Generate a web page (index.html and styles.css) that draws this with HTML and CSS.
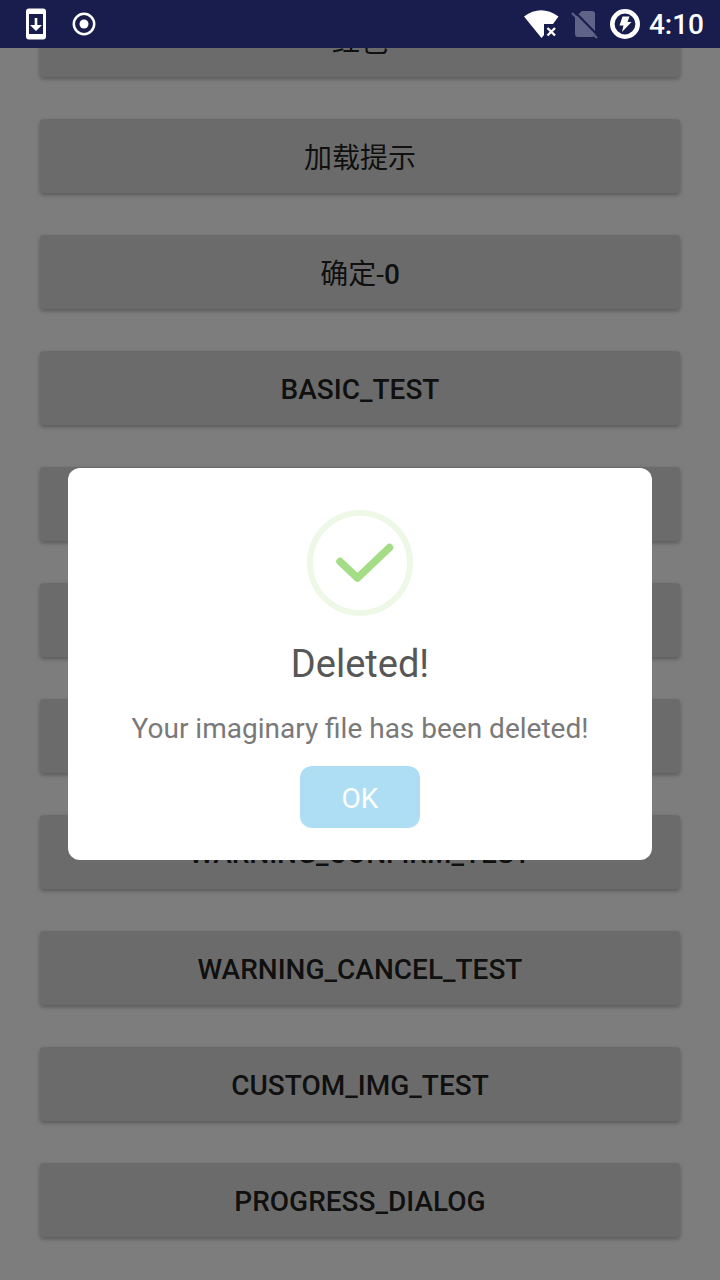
FILE: index.html
```html
<!DOCTYPE html>
<html lang="zh">
<head>
<meta charset="utf-8">
<meta name="viewport" content="width=device-width, initial-scale=1">
<title>Deleted!</title>
<link rel="stylesheet" href="styles.css">
</head>
<body>
<div class="screen">
  <header class="status-bar">
    <div class="status-group status-left">
      <svg class="icon-update" width="22" height="32" viewBox="0 0 22 32" aria-hidden="true">
        <path fill="#fff" fill-rule="evenodd" d="M3 0.5H17A3 3 0 0 1 20 3.500V28.500A3 3 0 0 1 17 31.500H3A3 3 0 0 1 0 28.500V3.500A3 3 0 0 1 3 .5ZM3 6V26H17V6Z"/>
        <path fill="#fff" d="M8.700 10H11.300V17H16L10 23L4 17H8.700Z"/>
      </svg>
      <svg width="24" height="24" viewBox="0 0 24 24" aria-hidden="true">
        <circle cx="12" cy="12" r="10.200" fill="none" stroke="#fff" stroke-width="2.500"/>
        <circle cx="12" cy="12" r="4.500" fill="#fff"/>
      </svg>
    </div>
    <div class="status-group status-right">
      <svg width="35" height="30" viewBox="0 0 35 30" aria-hidden="true">
        <path fill="#fff" d="M0 7.500Q17-5 34.500 7.500L29 15H20V26L17.500 29Z"/>
        <path stroke="#fff" stroke-width="2.400" d="M23.500 19L31 26.500M31 19L23.500 26.500"/>
      </svg>
      <svg width="27" height="30" viewBox="0 0 27 30" aria-hidden="true">
        <path fill="#5f6388" d="M11 2H21A3 3 0 0 1 24 5V25A3 3 0 0 1 21 28H7A3 3 0 0 1 4 25V8Z"/>
        <path stroke="#181d4d" stroke-width="2" d="M3 2L27 26.500"/>
        <path stroke="#5f6388" stroke-width="2.200" d="M1 4L26 29"/>
      </svg>
      <svg width="30" height="30" viewBox="0 0 30 30" aria-hidden="true">
        <circle cx="15" cy="15" r="12.700" fill="none" stroke="#fff" stroke-width="4.600"/>
        <path fill="#fff" d="M12.500 7.500H19.500L17.500 13H21.500L12 23L13.500 16.500H9.500Z"/>
      </svg>
      <time class="clock">4:10</time>
    </div>
  </header>
  <div class="content">
    <main class="list">
      <button class="item item-cjk" type="button">红包</button>
      <button class="item item-cjk" type="button">加载提示</button>
      <button class="item item-cjk" type="button">确定-<span class="digit">0</span></button>
      <button class="item" type="button">BASIC_TEST</button>
      <button class="item" type="button"></button>
      <button class="item" type="button"></button>
      <button class="item" type="button"></button>
      <button class="item" type="button">WARNING_CONFIRM_TEST</button>
      <button class="item" type="button">WARNING_CANCEL_TEST</button>
      <button class="item" type="button">CUSTOM_IMG_TEST</button>
      <button class="item" type="button">PROGRESS_DIALOG</button>
    </main>
    <div class="scrim">
      <section class="dialog" role="dialog" aria-modal="true" aria-labelledby="dialog-title">
        <svg width="106" height="106" viewBox="0 0 106 106" aria-hidden="true">
          <circle cx="53" cy="53" r="50" fill="none" stroke="#edf8e7" stroke-width="6"/>
          <path d="M33 51.500L50.500 68L82.500 37.500" fill="none" stroke="#a5dc86" stroke-width="7.500" stroke-linecap="round" stroke-linejoin="round"/>
        </svg>
        <h1 class="title" id="dialog-title">Deleted!</h1>
        <p class="message">Your imaginary file has been deleted!</p>
        <button class="confirm" type="button">OK</button>
      </section>
    </div>
  </div>
</div>
</body>
</html>
```
FILE: styles.css
```css
* {
  box-sizing: border-box;
}

body {
  margin: 0;
  font-family: Roboto, "Noto Sans CJK SC", sans-serif;
  font-size: 28px;
}

.screen {
  display: flex;
  flex-direction: column;
  height: 100vh;
  background: #fafafa;
}

.status-bar {
  display: flex;
  flex: none;
  align-items: center;
  justify-content: space-between;
  height: 48px;
  padding: 0 16px 0 26px;
  background: #181d4d;
  color: #fff;
}

.status-group {
  display: flex;
  align-items: center;
}

.status-left {
  gap: 24px;
}

.status-right {
  gap: 12px;
}

.clock {
  margin-left: -3px;
  padding-top: 2px;
  font-size: 28px;
  font-weight: 500;
  line-height: 32px;
}

.content {
  position: relative;
  flex: 1;
  min-height: 0;
  overflow: hidden;
}

.list {
  display: flex;
  flex-direction: column;
  justify-content: flex-end;
  gap: 42px;
  height: 100%;
  padding: 0 40px 43px;
}

.item {
  flex: none;
  height: 74px;
  padding: 2px 16px 0;
  border: 0;
  border-radius: 4px;
  background: #d6d7d7;
  box-shadow: 0 2px 4px rgba(0, 0, 0, 0.3);
  color: rgba(0, 0, 0, 0.87);
  font-family: Roboto, "Noto Sans CJK SC", sans-serif;
  font-size: 28px;
  font-weight: 500;
}

.item-cjk {
  padding: 0 16px;
  font-weight: 400;
}

.digit {
  font-weight: 500;
}

.scrim {
  position: absolute;
  inset: 0;
  display: flex;
  align-items: center;
  justify-content: center;
  padding: 0 68px;
  background: rgba(0, 0, 0, 0.5);
}

.dialog {
  display: flex;
  flex-direction: column;
  align-items: center;
  width: 100%;
  padding: 42px 32px 32px;
  border-radius: 12px;
  background: #fff;
}

.title {
  margin: 26px 0 0;
  color: #575757;
  font-size: 38px;
  font-weight: 400;
  line-height: 44px;
}

.message {
  margin: 26px 0 20px;
  color: #797979;
  font-size: 28px;
  line-height: 34px;
  text-align: center;
}

.confirm {
  height: 62px;
  padding: 2px 42px 0;
  border: 0;
  border-radius: 12px;
  background: #aedef4;
  color: #fff;
  font-family: inherit;
  font-size: 28px;
}
```
